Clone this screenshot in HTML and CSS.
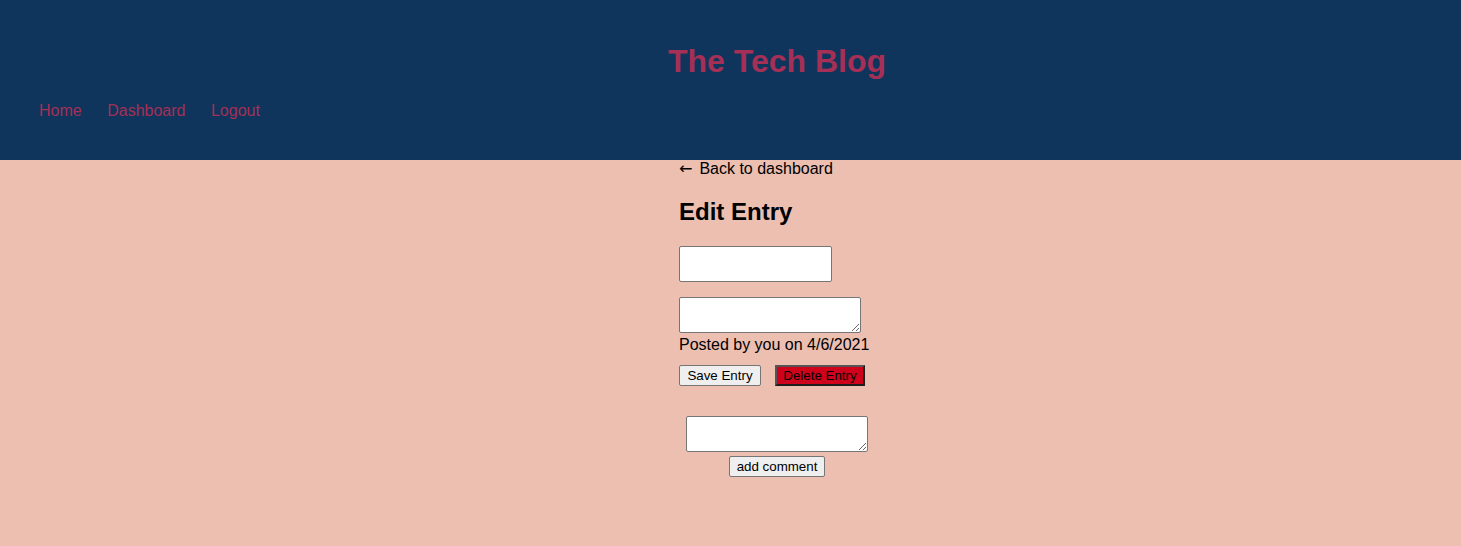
FILE: index.html
```html
<!DOCTYPE html>
<html lang="en">
<head>
<meta charset="utf-8">
<title>The Tech Blog</title>
<link rel="stylesheet" href="styles.css">
</head>
<body>
<header class="site-header">
  <h1 class="site-title">The Tech Blog</h1>
  <nav class="site-nav">
    <a href="#" class="nav-link">Home</a>
    <a href="#" class="nav-link">Dashboard</a>
    <a href="#" class="nav-link">Logout</a>
  </nav>
</header>
<main class="main">
  <div class="column">
    <a href="#" class="back-link"><span class="arrow">&larr;</span>Back to dashboard</a>
    <h2 class="page-title">Edit Entry</h2>
    <form class="edit-form">
      <input type="text" class="field-input">
      <textarea class="field-area"></textarea>
      <p class="meta">Posted by you on 4/6/2021</p>
      <div class="actions">
        <button type="button" class="btn btn-save">Save Entry</button>
        <button type="button" class="btn btn-delete">Delete Entry</button>
      </div>
    </form>
    <form class="comment-form">
      <textarea class="field-area"></textarea>
      <button type="button" class="btn">add comment</button>
    </form>
  </div>
</main>
</body>
</html>
```

FILE: styles.css
```css
html, body {
  margin: 0;
  padding: 0;
}
body {
  background: #ecbfb1;
  font-family: "Liberation Sans", Arial, sans-serif;
  font-size: 16px;
  color: #000;
  min-height: 546px;
}
.site-header {
  background: #10355c;
  height: 160px;
  box-sizing: border-box;
  padding-top: 43px;
}
.site-title {
  margin: 0;
  font-size: 32px;
  line-height: 37px;
  font-weight: bold;
  color: #a62f56;
  text-align: center;
  padding-left: 93px;
}
.site-nav {
  display: flex;
  gap: 25.5px;
  padding-left: 39px;
  margin-top: 22px;
}
.nav-link {
  color: #a62f56;
  text-decoration: none;
  font-size: 16px;
  line-height: 18px;
}
.main {
  display: flex;
  justify-content: center;
  padding-left: 93px;
}
.column {
  width: 196px;
}
.back-link {
  display: flex;
  align-items: baseline;
  color: #000;
  text-decoration: none;
  line-height: 18px;
  white-space: nowrap;
}
.arrow {
  font-family: "DejaVu Sans", sans-serif;
  font-size: 16px;
  margin-right: 7px;
}
.page-title {
  font-size: 24px;
  font-weight: bold;
  line-height: 28px;
  margin: 20px 0 20px;
}
.edit-form {
  display: flex;
  flex-direction: column;
  align-items: flex-start;
}
.field-input {
  box-sizing: border-box;
  width: 153px;
  height: 36px;
  margin: 0;
  border: 1px solid #767676;
  border-radius: 2px;
  background: #fff;
}
.field-area {
  display: block;
  box-sizing: border-box;
  width: 182px;
  height: 36px;
  margin: 15px 0 0;
  border: 1px solid #767676;
  border-radius: 2px;
  background: #fff;
  resize: both;
}
.meta {
  margin: 2px 0 0;
  line-height: 20px;
  white-space: nowrap;
}
.actions {
  display: flex;
  gap: 14px;
  margin-top: 10px;
}
.btn {
  font-family: "Liberation Sans", Arial, sans-serif;
  font-size: 13.33px;
  line-height: 15px;
  height: 21px;
  padding: 1px 7px;
  margin: 0;
  background: #efefef;
  color: #000;
  border: 1px solid #767676;
  border-radius: 2px;
  white-space: nowrap;
  box-sizing: border-box;
}
.btn-save {
  min-width: 82px;
}
.btn-delete {
  background: #d0011b;
  border: 2px solid;
  border-color: #555 #1e1e1e #1e1e1e #555;
  border-radius: 0;
  padding: 0 6px;
  min-width: 90px;
}
.comment-form {
  display: flex;
  flex-direction: column;
  align-items: center;
  margin-top: 30px;
}
.comment-form .field-area {
  margin: 0;
}
.comment-form .btn {
  margin-top: 4px;
}
```
